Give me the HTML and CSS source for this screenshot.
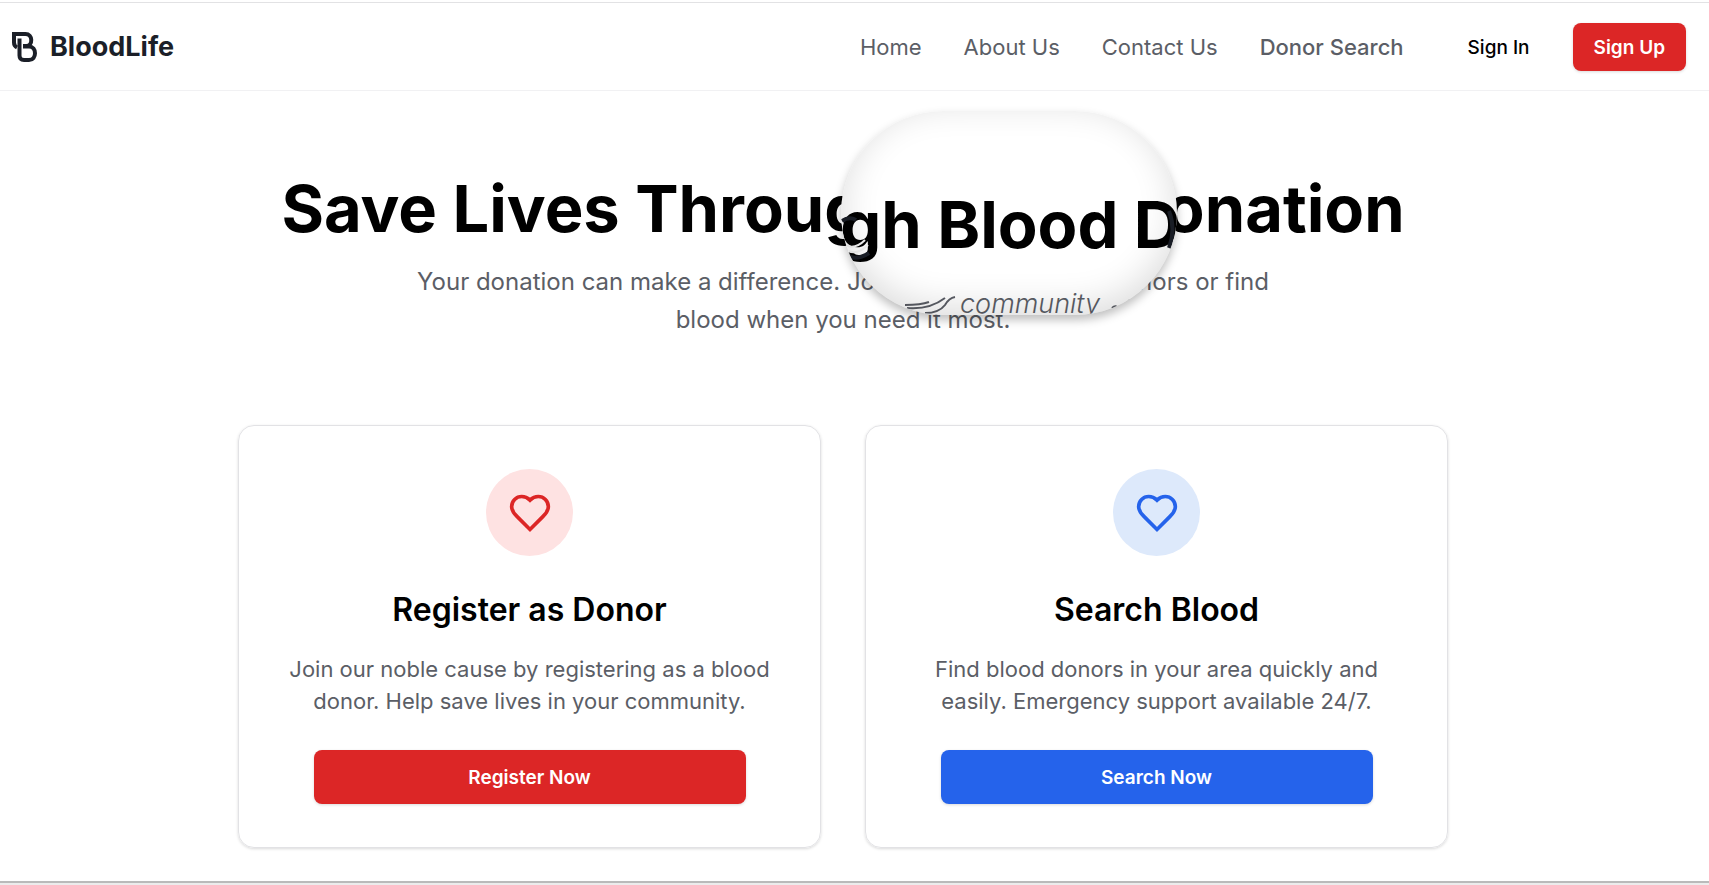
FILE: index.html
```html
<!DOCTYPE html>
<html lang="en">
<head>
    <meta charset="UTF-8">
    <meta name="viewport" content="width=device-width, initial-scale=1.0">
    <title>BloodLife</title>
    <link rel="stylesheet" href="styles.css">
</head>
<body>
    <!-- Header -->
    <header class="header">
        <a class="brand" href="#">
            <svg class="brand-icon" viewBox="0 0 26 30" aria-hidden="true">
                <path d="M5 15.500C3 14.500 2 13 2 10.500V2H13.500C21 2 21 13.500 14.500 14H11"/>
                <path d="M7.500 6.500V23.500Q7.500 28 12 28H17C25 28 25 14.500 17 14.500H11"/>
            </svg>
            <span>BloodLife</span>
        </a>
        <nav class="nav">
            <a href="#">Home</a>
            <a href="#">About Us</a>
            <a href="#">Contact Us</a>
            <a class="active" href="#">Donor Search</a>
        </nav>
        <div class="auth">
            <button class="sign-in" type="button">Sign In</button>
            <button class="button sign-up" type="button">Sign Up</button>
        </div>
    </header>

    <!-- Main Content -->
    <main class="main">
        <section class="hero">
            <h1>Save Lives Through Blood Donation</h1>
            <p>Your donation can make a difference. Join our community of donors or find blood when you need it most.</p>

            <!-- Glass lens over the heading -->
            <div class="lens" aria-hidden="true">
                <div class="lens-title">gh Blood D</div>
                <svg class="lens-art" viewBox="0 0 336 204">
                    <path class="glint" d="M4 134Q14 139 24 129M7 140Q17 144 27 134"/>
                    <path class="bend" d="M1 110Q8 105 15 109M5 143Q14 151 28 142"/>
                    <path class="bend" d="M328 100Q335 118 328 137"/>
                    <path class="ripple" d="M64 194Q80 194 88 191M66 197Q88 199 104 187M84 202Q98 202 104 194Q108 187 114 186"/>
                    <path class="ripple" d="M271 197Q275 193 278 198M287 190L291 189"/>
                    <text x="119" y="202">community</text>
                </svg>
            </div>
        </section>

        <section class="cards">
            <article class="card">
                <div class="icon icon-red">
                    <svg viewBox="0 0 24 24" aria-hidden="true"><path d="M19 14c1.490-1.460 3-3.210 3-5.500A5.500 5.500 0 0 0 16.500 3c-1.760 0-3 .5-4.500 2-1.500-1.500-2.740-2-4.500-2A5.500 5.500 0 0 0 2 8.500c0 2.300 1.500 4.050 3 5.500l7 7Z"/></svg>
                </div>
                <h2>Register as Donor</h2>
                <p>Join our noble cause by registering as a blood donor. Help save lives in your community.</p>
                <button class="button" type="button">Register Now</button>
            </article>
            <article class="card">
                <div class="icon icon-blue">
                    <svg viewBox="0 0 24 24" aria-hidden="true"><path d="M19 14c1.490-1.460 3-3.210 3-5.500A5.500 5.500 0 0 0 16.500 3c-1.760 0-3 .5-4.500 2-1.500-1.500-2.740-2-4.500-2A5.500 5.500 0 0 0 2 8.500c0 2.300 1.500 4.050 3 5.500l7 7Z"/></svg>
                </div>
                <h2>Search Blood</h2>
                <p>Find blood donors in your area quickly and easily. Emergency support available 24/7.</p>
                <button class="button button-blue" type="button">Search Now</button>
            </article>
        </section>
    </main>

    <footer class="footer"></footer>
</body>
</html>
```
FILE: styles.css
```css
/* General Styles */
* {
    box-sizing: border-box;
}

body {
    margin: 0;
    min-height: 100vh;
    display: flex;
    flex-direction: column;
    font-family: Inter, sans-serif;
    color: #000;
    background: #fff;
    overflow-x: hidden;
}

h1, h2, p {
    margin: 0;
}

/* Header */
.header {
    display: flex;
    align-items: center;
    margin-top: 2px;
    padding: 20px 23px 19px 12px;
    border-top: 1px solid #e2e2e4;
    border-bottom: 1px solid #f1f1f3;
}

.brand {
    display: flex;
    align-items: center;
    gap: 12px;
    margin-right: auto;
    color: #1b1f28;
    font-size: 27px;
    line-height: 30px;
    font-weight: 700;
    text-decoration: none;
}

.brand-icon {
    width: 26px;
    height: 30px;
    fill: none;
    stroke: #1b1f28;
    stroke-width: 4;
}

.nav {
    display: flex;
    gap: 42px;
    font-size: 22px;
}

.nav a {
    color: #5b5e66;
    text-decoration: none;
}

.nav .active {
    font-weight: 500;
}

.auth {
    display: flex;
    align-items: center;
    gap: 22px;
    margin-left: 43px;
}

.sign-in {
    padding: 0 21px;
    border: none;
    background: none;
    color: #000;
    font: 500 19px Inter, sans-serif;
    cursor: pointer;
}

.button {
    height: 54px;
    border: none;
    border-radius: 8px;
    background: #dc2626;
    color: #fff;
    font: 600 19px Inter, sans-serif;
    box-shadow: 0 1px 3px rgba(0, 0, 0, 0.15);
    cursor: pointer;
}

.sign-up {
    height: 48px;
    padding: 0 21px;
}

/* Main Content */
.main {
    flex: 1;
    padding: 85px 23px 33px 0;
}

.hero {
    position: relative;
    text-align: center;
}

.hero h1 {
    font-size: 65px;
    line-height: 65px;
    font-weight: 700;
}

.hero p {
    max-width: 916px;
    margin: 22px auto 0;
    color: #5b5e66;
    font-size: 24px;
    line-height: 38px;
}

/* Lens */
.lens {
    position: absolute;
    top: -65px;
    left: calc(50% - 2px);
    width: 336px;
    height: 204px;
    border-radius: 102px;
    overflow: hidden;
    background: #fff;
    box-shadow: 0 5px 10px rgba(0, 0, 0, 0.25);
}

.lens::after {
    content: "";
    position: absolute;
    inset: 0;
    border-radius: 102px;
    box-shadow: inset 0 -8px 36px rgba(0, 0, 0, 0.14);
}

.lens-title {
    display: flex;
    justify-content: center;
    padding: 81px 0 0 3px;
    font-size: 65px;
    line-height: 65px;
    font-weight: 700;
    white-space: nowrap;
}

.lens-art {
    position: absolute;
    left: 0;
    bottom: 0;
    width: 100%;
    height: 100%;
    fill: #5b5e66;
    font-size: 27px;
    font-style: italic;
    font-weight: 300;
}

.ripple, .glint, .bend {
    fill: none;
    stroke: #5b5e66;
    stroke-width: 2;
}

.glint {
    stroke: #f4f4f4;
}

.bend {
    stroke: #1b1f28;
    stroke-width: 4;
}

/* Cards */
.cards {
    display: grid;
    grid-template-columns: 1fr 1fr;
    gap: 44px;
    max-width: 1210px;
    margin: 86px auto 0;
}

.card {
    display: flex;
    flex-direction: column;
    align-items: center;
    padding: 43px;
    border: 1px solid #e2e2e5;
    border-radius: 16px;
    text-align: center;
    box-shadow: 0 1px 3px rgba(0, 0, 0, 0.15);
}

.icon {
    display: flex;
    align-items: center;
    justify-content: center;
    width: 87px;
    height: 87px;
    border-radius: 50%;
}

.icon svg {
    width: 44px;
    height: 44px;
    fill: none;
    stroke: currentColor;
    stroke-width: 2;
}

.icon-red {
    background: #fee2e2;
    color: #dc2626;
}

.icon-blue {
    background: #dde9fb;
    color: #2563eb;
}

.card h2 {
    margin-top: 32px;
    font-size: 32px;
    line-height: 44px;
    font-weight: 600;
}

.card p {
    margin-top: 21px;
    color: #5b5e66;
    font-size: 22px;
    line-height: 32px;
}

.card .button {
    width: 100%;
    max-width: 432px;
    margin-top: 33px;
}

.card .button-blue {
    background: #2563eb;
}

/* Footer */
.footer {
    height: 4px;
    border-top: 2px solid #bababa;
    background: #ececec;
}

/* Responsive Design */
@media (max-width: 768px) {
    .header {
        flex-wrap: wrap;
        gap: 20px;
    }

    .cards {
        grid-template-columns: 1fr;
    }
}
```
